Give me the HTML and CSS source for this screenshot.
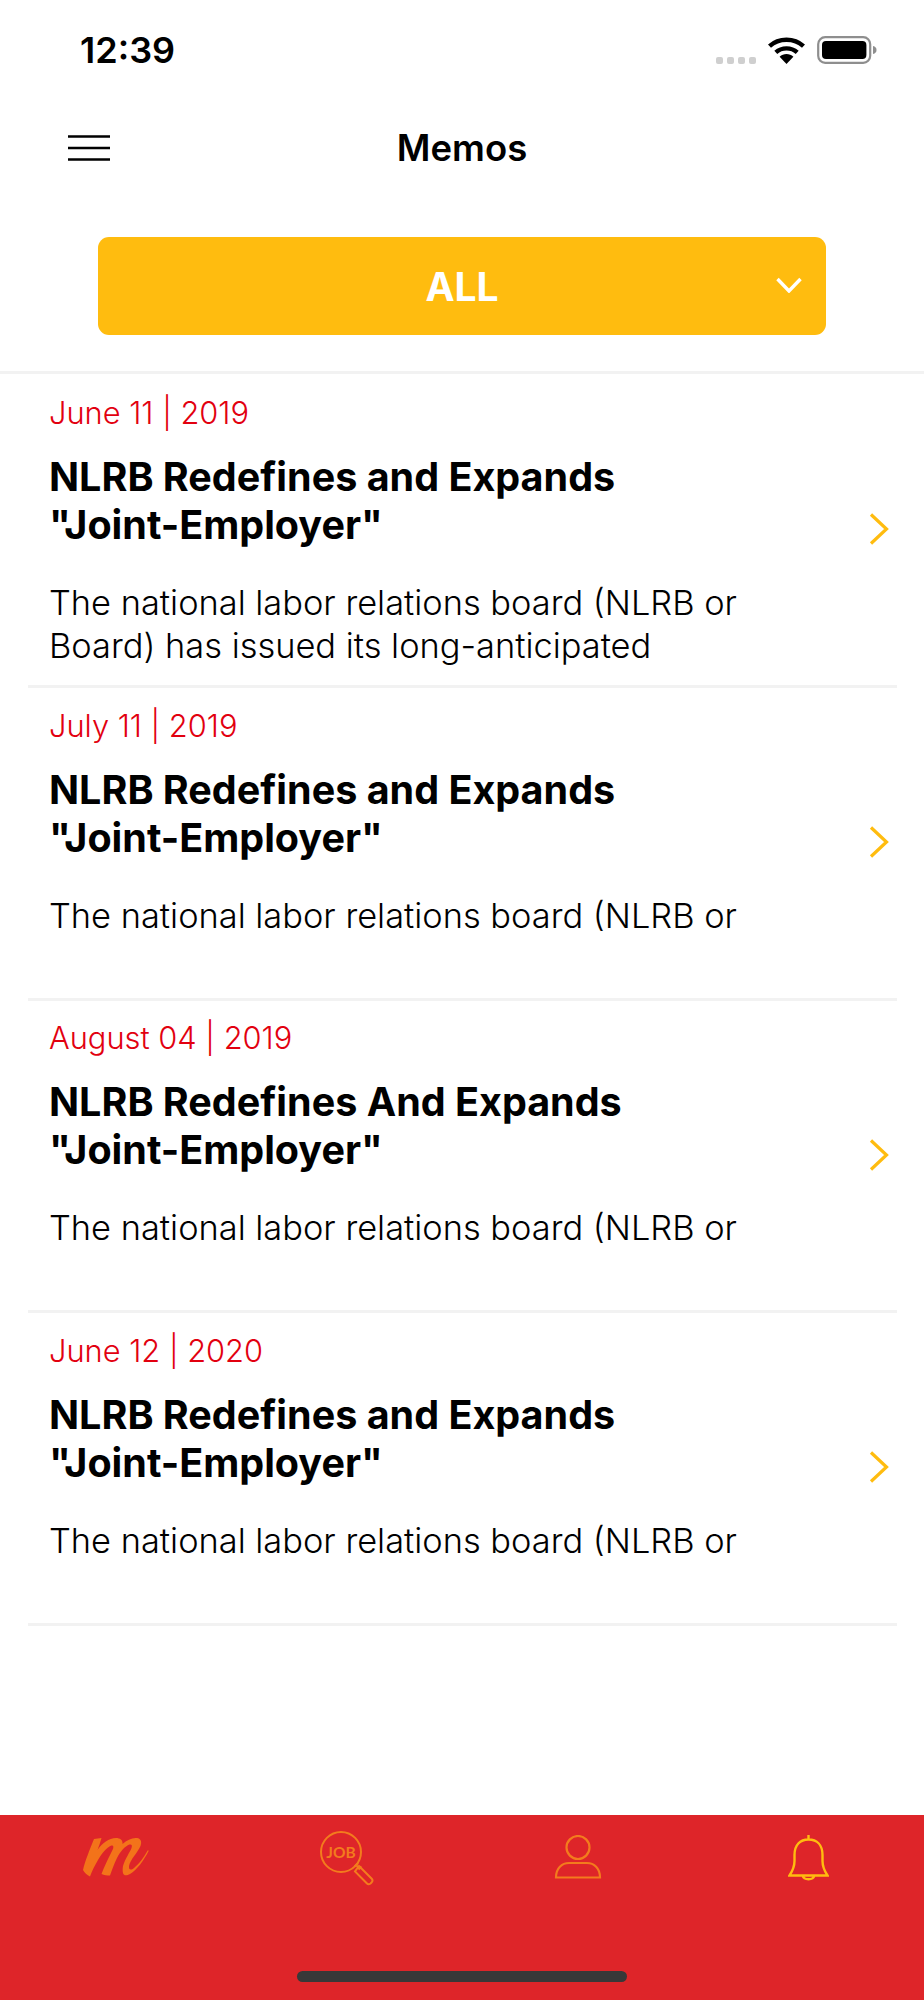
FILE: index.html
```html
<!DOCTYPE html>
<html lang="en">
<head>
<meta charset="utf-8">
<title>Memos</title>
<link rel="stylesheet" href="styles.css">
</head>
<body>
<div class="app">
  <div class="status">
    <span class="time">12:39</span>
    <div class="status-icons">
      <div class="dots"><i></i><i></i><i></i><i></i></div>
      <svg class="wifi" width="37" height="27" viewBox="0 0 37 27"><path d="M1.5 9.2C10.8 .6 26.2 .6 35.5 9.2" fill="none" stroke="#000" stroke-width="4.4"/><path d="M7.8 15.4C13.8 10 23.2 10 29.2 15.4" fill="none" stroke="#000" stroke-width="4.4"/><path d="M11.6 19.8C15.4 16.2 21.6 16.2 25.4 19.8L18.5 27Z" fill="#000"/></svg>
      <svg class="battery" width="60" height="28" viewBox="0 0 60 28"><rect x="1.2" y="1.2" width="52" height="25.6" rx="7" fill="none" stroke="#8e8e8e" stroke-width="2.2"/><rect x="5" y="5" width="44.4" height="18" rx="4" fill="#000"/><path d="M56 10c2.400.6 3.500 2 3.500 4s-1.100 3.400-3.500 4z" fill="#8e8e8e"/></svg>
    </div>
  </div>
  <header class="nav">
    <svg class="menu" width="42" height="26" viewBox="0 0 42 26"><path d="M0 1.500H42M0 13H42M0 24.500H42" stroke="#000" stroke-width="2.600"/></svg>
    <h1>Memos</h1>
  </header>
  <div class="filter-wrap">
    <button class="filter">ALL
      <svg class="filter-chevron" width="26" height="16" viewBox="0 0 26 16"><path d="M1.500 2L13 14L24.500 2" fill="none" stroke="#fff" stroke-width="3.400"/></svg>
    </button>
  </div>
  <main class="list">
    <article class="memo">
      <div class="memo-text">
        <p class="date">June 11 | 2019</p>
        <h2>NLRB Redefines and Expands<br>"Joint-Employer"</h2>
        <p class="body">The national labor relations board (NLRB or<br>Board) has issued its long-anticipated</p>
      </div>
      <svg class="chevron" width="20" height="32" viewBox="0 0 20 32"><path d="M2 1.500L17.500 16L2 30.500" fill="none" stroke="#ffbc0f" stroke-width="3.200"/></svg>
    </article>
    <article class="memo">
      <div class="memo-text">
        <p class="date">July 11 | 2019</p>
        <h2>NLRB Redefines and Expands<br>"Joint-Employer"</h2>
        <p class="body">The national labor relations board (NLRB or</p>
      </div>
      <svg class="chevron" width="20" height="32" viewBox="0 0 20 32"><path d="M2 1.500L17.500 16L2 30.500" fill="none" stroke="#ffbc0f" stroke-width="3.200"/></svg>
    </article>
    <article class="memo">
      <div class="memo-text">
        <p class="date">August 04 | 2019</p>
        <h2>NLRB Redefines And Expands<br>"Joint-Employer"</h2>
        <p class="body">The national labor relations board (NLRB or</p>
      </div>
      <svg class="chevron" width="20" height="32" viewBox="0 0 20 32"><path d="M2 1.500L17.500 16L2 30.500" fill="none" stroke="#ffbc0f" stroke-width="3.200"/></svg>
    </article>
    <article class="memo">
      <div class="memo-text">
        <p class="date">June 12 | 2020</p>
        <h2>NLRB Redefines and Expands<br>"Joint-Employer"</h2>
        <p class="body">The national labor relations board (NLRB or</p>
      </div>
      <svg class="chevron" width="20" height="32" viewBox="0 0 20 32"><path d="M2 1.500L17.500 16L2 30.500" fill="none" stroke="#ffbc0f" stroke-width="3.200"/></svg>
    </article>
  </main>
  <nav class="tabbar">
    <div class="tabs">
      <div class="tab">
        <svg class="icon-m" width="66" height="40" viewBox="0 0 66 40"><path d="M11 2L18.500 1C17.500 5 16 9 14.500 13C19 6 26 1 33 1C37 1 40 3 39.500 7C44 3 49 .5 54 1C58 1.500 59 5 57.500 9C55 15 47 23 46 29C45.500 33 48 33.500 51 31C56 27 61 20 65 13L65.600 14C61 23 54 33 47 37C42 39.500 38.500 39 40 29C42 22 47 15 48.500 11C49.500 8 48.500 7 46.500 7.500C42 9 37 15 34 21C31 27 29 33 27 38.500C24 38.500 21 38 18.500 37C21 30 26 20 29.500 13C31 10 30.500 8 28.500 8.500C24 10 19 16 15 23C12 28 9 34 7 39.500C4 38 1.500 36 0 33C2 24 7 12 11 2Z" fill="#f3731a"/></svg>
      </div>
      <div class="tab">
        <svg class="icon-job" width="56" height="56" viewBox="0 0 56 56"><circle cx="22" cy="22" r="20" fill="none" stroke="#f37b1d" stroke-width="2"/><text x="22" y="28" text-anchor="middle" class="job-text">JOB</text><path d="M35.500 36.500L39 33M39.500 39.500L42.500 36.500M37.500 35.500L41 39M40 36L52.500 48.500Q54.500 50.500 52.500 52.500L51.500 53.500Q49.500 55 48 53.500L36 41.500Z" fill="none" stroke="#f37b1d" stroke-width="2"/></svg>
      </div>
      <div class="tab">
        <svg class="icon-person" width="48" height="44" viewBox="0 0 48 44"><circle cx="24" cy="12.500" r="11.500" fill="none" stroke="#f37b1d" stroke-width="2.200"/><path d="M2 42.500C2 33 8 28 15 28H33C40 28 46 33 46 42.500Z" fill="none" stroke="#f37b1d" stroke-width="2.200"/></svg>
      </div>
      <div class="tab">
        <svg class="icon-bell" width="41" height="46" viewBox="0 0 41 46"><path d="M20.500 0V4M6.500 20C6.500 10 12 4.500 20.500 4.500S34.500 10 34.500 20V26C34.500 32 36.500 36 39.500 40.500H1.500C4.500 36 6.500 32 6.500 26ZM14.500 40.500C16 45.500 25 45.500 26.500 40.500" fill="none" stroke="#ffbc0f" stroke-width="2.400"/></svg>
      </div>
    </div>
    <div class="home"></div>
  </nav>
</div>
</body>
</html>
```
FILE: styles.css
```css
* { box-sizing: border-box; }
html, body { margin: 0; padding: 0; background: #fff; }
body { font-family: Inter, "Liberation Sans", sans-serif; color: #000; }
h1, h2, p { margin: 0; font: inherit; }

.app { width: 924px; height: 2000px; display: flex; flex-direction: column; }

.status { height: 100px; padding: 29px 47px 0 80px; display: flex; justify-content: space-between; align-items: flex-start; }
.time { font-size: 36px; font-weight: 600; line-height: 42px; }
.status-icons { display: flex; align-items: flex-end; padding-top: 8px; height: 35px; }
.dots { display: flex; gap: 3.500px; margin-right: 12px; }
.dots i { display: block; width: 7.500px; height: 7.500px; border-radius: 2px; background: #cfcfcf; }
.wifi { margin-right: 12px; }
.battery { display: block; }

.nav { height: 96px; position: relative; display: flex; align-items: center; justify-content: center; }
.nav h1 { font-size: 36.500px; font-weight: 600; line-height: 40px; }
.menu { position: absolute; left: 68px; top: 35px; }

.filter-wrap { padding: 41px 98px 37px; border-bottom: 3px solid #f2f2f2; height: 178px; }
.filter { width: 100%; height: 98px; border: 0; border-radius: 11px; background: #ffbc0f; color: #fff; font-family: inherit; font-size: 39px; font-weight: 700; position: relative; padding: 0; display: block; }
.filter-chevron { position: absolute; right: 24px; top: 40px; }

.list { flex: 1; padding: 1.500px 27px 0 28px; }
.memo { height: 312.670px; border-bottom: 3px solid #f2f2f2; padding-left: 21px; display: flex; align-items: center; justify-content: space-between; }
.memo-text { width: 740px; align-self: flex-start; padding-top: 17.500px; }
.date { color: #e2000f; font-size: 30.800px; font-weight: 300; line-height: 40px; margin-bottom: 20px; }
.memo h2 { font-size: 39.500px; font-weight: 700; line-height: 48px; margin-bottom: 32px; }
.body { font-size: 34.400px; font-weight: 300; line-height: 43px; height: 86px; }
.chevron { margin-right: 8px; margin-bottom: 2px; }

.tabbar { height: 185px; background: #de2529; display: flex; flex-direction: column; align-items: center; }
.tabs { width: 100%; display: grid; grid-template-columns: repeat(4, 1fr); }
.tab { display: flex; justify-content: center; height: 70px; padding-top: 20px; }
.icon-m { margin-top: 2px; }
.icon-job { margin-top: -5px; }
.job-text { font-family: Lato, sans-serif; font-size: 15.500px; font-weight: 700; fill: #f37b1d; }
.home { width: 330px; height: 11px; border-radius: 6px; background: #383838; margin-top: 86px; }
```
